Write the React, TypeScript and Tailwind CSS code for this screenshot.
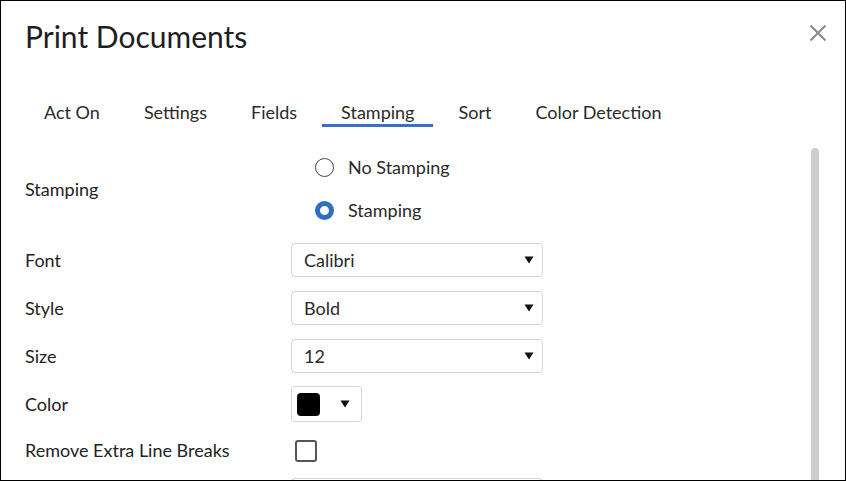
import React from "react";

const font = { fontFamily: "Lato, 'Open Sans', sans-serif" };

function Arrow() {
  return (
    <svg width="10" height="8" viewBox="0 0 10 8" className="block">
      <polygon points="0.5,0.5 9.5,0.5 5,7.5" fill="#111" />
    </svg>
  );
}

function Select({ value }: { value: string }) {
  return (
    <div className="flex h-[34px] w-[252px] items-center justify-between rounded-[4px] border border-[#d4d4d4] bg-white pl-[12px] pr-[8px] text-[18px] text-[#2a2a2a]">
      <span>{value}</span>
      <Arrow />
    </div>
  );
}

function Row({ label, children, className = "" }: { label: string; children: React.ReactNode; className?: string }) {
  return (
    <div className={"flex h-[34px] items-center " + className}>
      <div className="w-[266px] shrink-0 text-[18px] text-[#222]">{label}</div>
      {children}
    </div>
  );
}

export default function App() {
  const tabs = ["Act On", "Settings", "Fields", "Stamping", "Sort", "Color Detection"];
  return (
    <div
      className="flex h-[481px] w-[846px] flex-col overflow-hidden border border-black bg-white text-[#222]"
      style={font}
    >
      {/* header */}
      <div className="flex items-start justify-between pl-[24px] pr-[18px] pt-[18px]">
        <h1 className="text-[30px] leading-[34px] text-[#1e1e1e]">Print Documents</h1>
        <svg width="18" height="18" viewBox="0 0 18 18" className="mt-[5px]">
          <path d="M1.5 1.5 L16.5 16.5 M16.5 1.5 L1.5 16.5" stroke="#8a8a8a" strokeWidth="2" />
        </svg>
      </div>

      {/* tabs */}
      <div className="mt-[47px] flex gap-[6px] pl-[24px]">
        {tabs.map((t) => (
          <div
            key={t}
            className={
              "border-b-[3px] px-[19px] text-[18px] leading-[24px] text-[#2a2a2a] " +
              (t === "Stamping" ? "border-[#3a70c2]" : "border-transparent")
            }
          >
            {t}
          </div>
        ))}
      </div>

      {/* content */}
      <div className="flex min-h-0 flex-1">
        <div className="flex flex-1 flex-col pl-[24px] pt-[19px]">
          <div className="flex items-center">
            <div className="w-[266px] shrink-0 text-[18px] text-[#222]">Stamping</div>
            <div className="flex flex-col pl-[24px]">
              <div className="flex h-[43px] items-center gap-[14px]">
                <span className="block h-[19px] w-[19px] rounded-full border-[1.5px] border-[#444]" />
                <span className="text-[18px] text-[#2a2a2a]">No Stamping</span>
              </div>
              <div className="flex h-[43px] items-center gap-[14px]">
                <span className="block h-[19px] w-[19px] rounded-full border-[5px] border-[#2f6ec3] bg-white" />
                <span className="text-[18px] text-[#2a2a2a]">Stamping</span>
              </div>
            </div>
          </div>

          <Row label="Font" className="mt-[11px]">
            <Select value="Calibri" />
          </Row>
          <Row label="Style" className="mt-[14px]">
            <Select value="Bold" />
          </Row>
          <Row label="Size" className="mt-[14px]">
            <Select value="12" />
          </Row>
          <Row label="Color" className="mt-[14px]">
            <div className="flex h-[36px] w-[71px] items-center gap-[20px] rounded-[4px] border border-[#d4d4d4] bg-white pl-[5px]">
              <span className="block h-[23px] w-[23px] rounded-[4px] bg-black" />
              <Arrow />
            </div>
          </Row>
          <Row label="Remove Extra Line Breaks" className="mt-[16px]">
            <span className="ml-[4px] block h-[22px] w-[22px] rounded-[3px] border-2 border-[#555]" />
          </Row>
          <div className="mt-[14px] flex">
            <div className="w-[266px] shrink-0" />
            <div className="h-[34px] w-[252px] rounded-[4px] border border-[#d4d4d4]" />
          </div>
        </div>
        <div className="mr-[26px] mt-[21px] w-[8px] shrink-0 rounded-t-full bg-[#cdcdcd]" />
      </div>
    </div>
  );
}
